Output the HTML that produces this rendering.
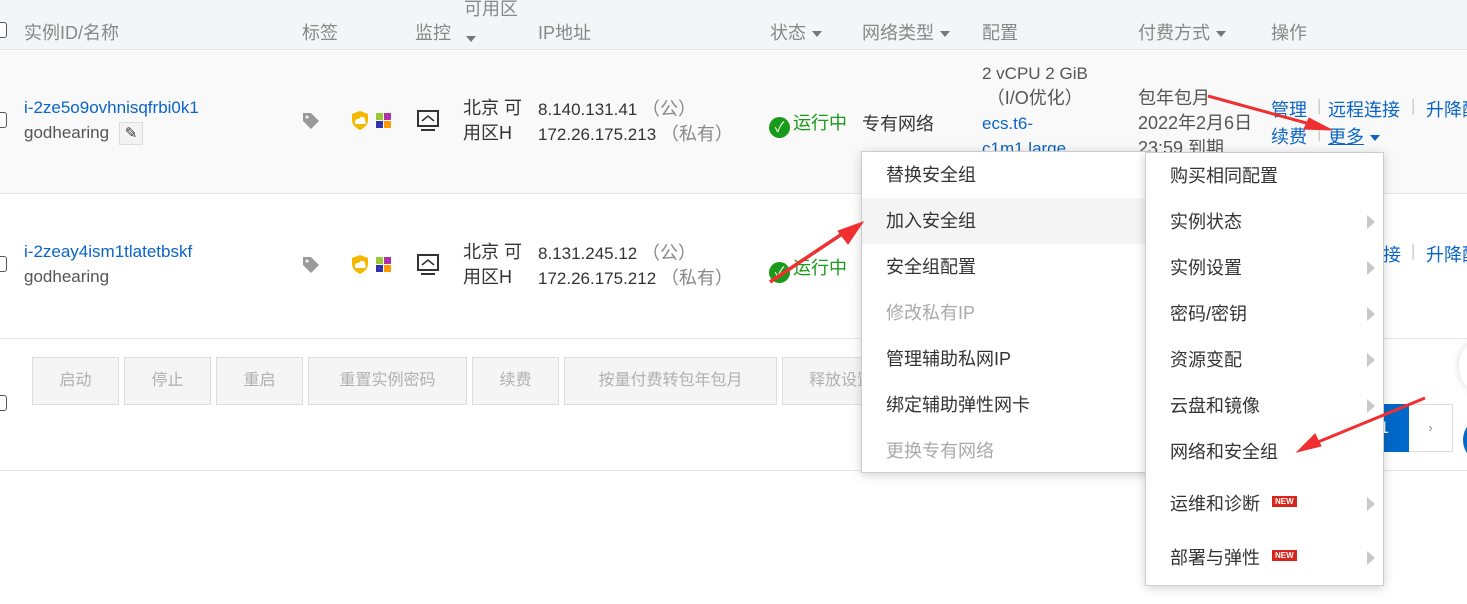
<!DOCTYPE html>
<html><head><meta charset="utf-8"><style>
*{margin:0;padding:0;box-sizing:border-box}
body{width:1467px;height:604px;overflow:hidden;background:#fff;font-family:"Liberation Sans","Noto Sans CJK SC",sans-serif;font-size:17px;color:#333;position:relative}
.a{position:absolute;white-space:nowrap}
.g{color:#888}
.b{color:#0a64c8}
.z{font-size:18px}
.cb{position:absolute;left:-6px;width:13px;height:16px;border:1.5px solid #555;border-radius:3px;background:#fff}
.tri{display:inline-block;width:0;height:0;border-left:5px solid transparent;border-right:5px solid transparent;border-top:6px solid #777;vertical-align:middle;margin-left:6px}
.btn{position:absolute;top:357px;height:48px;background:#f5f5f5;border:1px solid #ddd;color:#b0b0b0;text-align:center;line-height:46px;font-size:16px}
.menu{position:absolute;background:#fff;border:1px solid #ccc;box-shadow:0 2px 10px rgba(0,0,0,.18)}
.mi{position:absolute;left:0;right:0;height:46px;line-height:46px;padding-left:24px;font-size:18px;color:#333}
.arr{position:absolute;right:8px;top:16px;width:0;height:0;border-top:7px solid transparent;border-bottom:7px solid transparent;border-left:8px solid #c8c8c8}
.new{display:inline-block;background:#d9261c;color:#fff;font-size:8px;font-weight:bold;line-height:11px;padding:0 3px;vertical-align:6px;margin-left:12px}
.sep{color:#ccc}
</style></head><body>
<div class="a" style="left:0;top:0;width:1467px;height:50px;background:#f4f5f8;border-bottom:1px solid #e3e5ea"></div>
<div class="a" style="left:0;top:51px;width:1467px;height:143px;background:#f9f9f9;border-bottom:1px solid #e3e5ea"></div>
<div class="a" style="left:0;top:338px;width:1467px;height:1px;background:#e3e5ea"></div>
<div class="a" style="left:0;top:470px;width:1467px;height:1px;background:#e3e5ea"></div>

<div class="cb" style="top:22px"></div>
<div class="a g z" style="left:24px;top:19px">实例ID/名称</div>
<div class="a g z" style="left:302px;top:19px">标签</div>
<div class="a g z" style="left:415px;top:19px">监控</div>
<div class="a g z" style="left:464px;top:-5px">可用区</div>
<div class="a" style="left:466px;top:28px"><span class="tri" style="margin:0"></span></div>
<div class="a g z" style="left:538px;top:19px">IP地址</div>
<div class="a g z" style="left:770px;top:19px">状态<span class="tri"></span></div>
<div class="a g z" style="left:862px;top:19px">网络类型<span class="tri"></span></div>
<div class="a g z" style="left:982px;top:19px">配置</div>
<div class="a g z" style="left:1138px;top:19px">付费方式<span class="tri"></span></div>
<div class="a g z" style="left:1271px;top:19px">操作</div>

<!-- row 1 -->
<div class="cb" style="top:112px"></div>
<div class="a b" style="left:24px;top:98px">i-2ze5o9ovhnisqfrbi0k1</div>
<div class="a" style="left:24px;top:123px;color:#555">godhearing</div>
<div class="a" style="left:119px;top:122px;width:24px;height:23px;border:1px solid #ddd;background:#f3f3f3;text-align:center;font-size:15px;line-height:21px">✎</div>
<div class="a z" style="left:463px;top:96px;line-height:25px">北京 可<br>用区H</div>
<div class="a" style="left:538px;top:97px;line-height:25px">8.140.131.41 <span class="g z">（公）</span><br>172.26.175.213 <span class="g z">（私有）</span></div>
<div class="a z" style="left:769px;top:109px;color:#1a9a1a"><span style="display:inline-block;width:21px;height:21px;border-radius:50%;background:#1a9a1a;color:#fff;font-size:14px;line-height:21px;text-align:center;vertical-align:-3px;margin-right:3px">✓</span>运行中</div>
<div class="a z" style="left:862px;top:110px">专有网络</div>
<div class="a" style="left:982px;top:61px;line-height:25px;color:#555">2 vCPU 2 GiB<br>&nbsp;<span class="z">（I/O优化）</span><br><span class="b">ecs.t6-</span><br><span class="b">c1m1.large</span></div>
<div class="a z" style="left:1138px;top:86px;line-height:25px;color:#555">包年包月<br>2022年2月6日<br>23:59 到期</div>
<div class="a b z" style="left:1271px;top:96px">管理</div>
<div class="a sep" style="left:1317px;top:96px">|</div>
<div class="a b z" style="left:1328px;top:96px">远程连接</div>
<div class="a sep" style="left:1411px;top:96px">|</div>
<div class="a b z" style="left:1426px;top:96px">升降配</div>
<div class="a b z" style="left:1271px;top:123px">续费</div>
<div class="a sep" style="left:1317px;top:123px">|</div>
<div class="a b z" style="left:1328px;top:123px"><span style="text-decoration:underline">更多</span><span class="tri" style="border-top-color:#0a64c8"></span></div>

<!-- row 2 -->
<div class="cb" style="top:256px"></div>
<div class="a b" style="left:24px;top:242px">i-2zeay4ism1tlatetbskf</div>
<div class="a" style="left:24px;top:267px;color:#555">godhearing</div>
<div class="a z" style="left:463px;top:240px;line-height:25px">北京 可<br>用区H</div>
<div class="a" style="left:538px;top:241px;line-height:25px">8.131.245.12 <span class="g z">（公）</span><br>172.26.175.212 <span class="g z">（私有）</span></div>
<div class="a z" style="left:769px;top:254px;color:#1a9a1a"><span style="display:inline-block;width:21px;height:21px;border-radius:50%;background:#1a9a1a;color:#fff;font-size:14px;line-height:21px;text-align:center;vertical-align:-3px;margin-right:3px">✓</span>运行中</div>
<div class="a b z" style="left:1383px;top:241px">接</div>
<div class="a sep" style="left:1411px;top:241px">|</div>
<div class="a b z" style="left:1426px;top:241px">升降配</div>

<!-- icons -->
<svg class="a" style="left:0;top:0" width="460" height="340">
 <g id="ic">
 <path d="M303 113h8l8 8-8 8-8-8z" fill="#9a9a9a"/><circle cx="307" cy="117" r="1.5" fill="#f9f9f9"/>
 <path d="M352 114l8-3 8 3v6c0 5-4 8-8 10-4-2-8-5-8-10z" fill="#f5b800"/><path d="M355 122a3 3 0 0 1 4-3 3 3 0 0 1 6 2 2 2 0 0 1 0 3h-10z" fill="#fff"/>
 <rect x="376" y="113" width="7" height="7" fill="#9c3"/><rect x="384" y="113" width="7" height="7" fill="#a3a"/><rect x="376" y="121" width="7" height="7" fill="#33a"/><rect x="384" y="121" width="7" height="7" fill="#f90"/>
 <rect x="418" y="111" width="20" height="15" fill="none" stroke="#333" stroke-width="2"/><path d="M422 121l6-5 6 5" fill="none" stroke="#333" stroke-width="1.5"/><path d="M421 130h14" stroke="#333" stroke-width="2"/>
 </g>
 <use href="#ic" y="144"/>
</svg>

<!-- footer buttons -->
<div class="cb" style="top:395px"></div>
<div class="btn" style="left:32px;width:87px">启动</div>
<div class="btn" style="left:124px;width:87px">停止</div>
<div class="btn" style="left:216px;width:87px">重启</div>
<div class="btn" style="left:308px;width:159px">重置实例密码</div>
<div class="btn" style="left:472px;width:87px">续费</div>
<div class="btn" style="left:564px;width:213px">按量付费转包年包月</div>
<div class="btn" style="left:782px;width:100px;text-align:left;padding-left:26px">释放设置</div>

<!-- pagination -->
<div class="a" style="left:1370px;top:404px;width:39px;height:48px;background:#0068c8;color:#fff;line-height:48px;text-align:right;padding-right:20px">1</div>
<div class="a" style="left:1409px;top:404px;width:44px;height:48px;border:1px solid #ddd;border-left:none;text-align:center;line-height:46px;color:#888;font-size:13px">›</div>
<div class="a" style="left:1463px;top:418px;width:40px;height:44px;border-radius:50%;background:#0068c8"></div>
<div class="a" style="left:1459px;top:340px;width:40px;height:52px;border-radius:50%;background:#fff;box-shadow:0 0 8px rgba(0,0,0,.15)"></div>

<!-- left menu -->
<div class="menu" style="left:861px;top:151px;width:290px;height:322px">
 <div class="mi" style="top:0">替换安全组</div>
 <div class="mi" style="top:46px;background:#f4f4f4">加入安全组</div>
 <div class="mi" style="top:92px">安全组配置</div>
 <div class="mi" style="top:138px;color:#aaa">修改私有IP</div>
 <div class="mi" style="top:184px">管理辅助私网IP</div>
 <div class="mi" style="top:230px">绑定辅助弹性网卡</div>
 <div class="mi" style="top:276px;color:#aaa">更换专有网络</div>
</div>
<!-- right menu -->
<div class="menu" style="left:1145px;top:152px;width:239px;height:434px">
 <div class="mi" style="top:0">购买相同配置</div>
 <div class="mi" style="top:46px">实例状态<i class="arr"></i></div>
 <div class="mi" style="top:92px">实例设置<i class="arr"></i></div>
 <div class="mi" style="top:138px">密码/密钥<i class="arr"></i></div>
 <div class="mi" style="top:184px">资源变配<i class="arr"></i></div>
 <div class="mi" style="top:230px">云盘和镜像<i class="arr"></i></div>
 <div class="mi" style="top:276px">网络和安全组</div>
 <div class="mi" style="top:328px">运维和诊断<span class="new">NEW</span><i class="arr"></i></div>
 <div class="mi" style="top:382px">部署与弹性<span class="new">NEW</span><i class="arr"></i></div>
</div>

<!-- red arrows -->
<svg class="a" style="left:0;top:0" width="1467" height="604">
 <g fill="#f03030" stroke="#f03030">
  <path d="M1208 96L1310 124" stroke-width="3"/><path d="M1332 130l-28-1 5-11z" stroke-width="1"/>
  <path d="M770 282L842 234" stroke-width="3.5"/><path d="M863 222l-15 22-10-13z" stroke-width="1"/>
  <path d="M1425 398L1318 442" stroke-width="3"/><path d="M1297 452l18-18 6 12z" stroke-width="1"/>
 </g>
</svg>
</body></html>
